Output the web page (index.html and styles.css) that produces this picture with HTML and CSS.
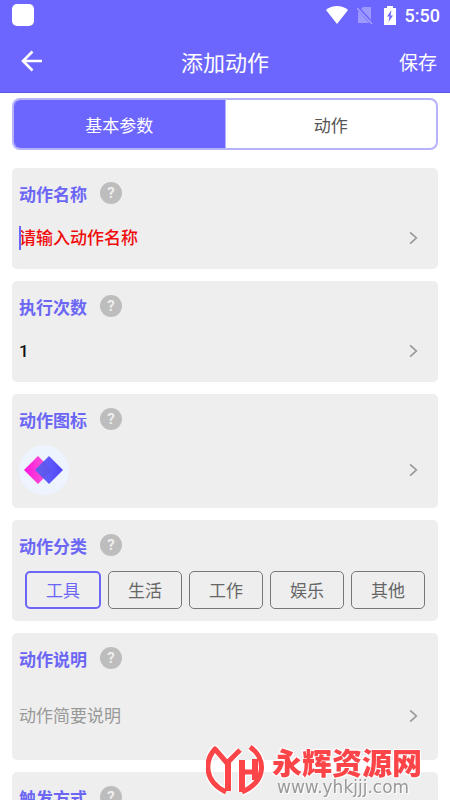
FILE: index.html
```html
<!DOCTYPE html>
<html lang="zh-CN">
<head>
<meta charset="utf-8">
<meta name="viewport" content="width=device-width, initial-scale=1">
<title>添加动作</title>
<link rel="stylesheet" href="styles.css">
</head>
<body>
<header class="top">
  <div class="status">
    <span class="app-dot"></span>
    <div class="status-icons">
      <svg width="22" height="18" viewBox="0 0 22 18"><path fill="#fff" d="M0 4C6-1.300 16-1.300 22 4L11 18Z"/></svg>
      <svg width="16" height="18" viewBox="0 0 16 18"><path fill="#9d99ff" d="M6 1h8v16H1V6Z"/><path d="M0 1L15 17.500" stroke="#6c66ff" stroke-width="3.500"/><path d="M0 2L15 18" stroke="#aaa6ff" stroke-width="1.300"/></svg>
      <svg class="battery" width="12" height="19" viewBox="0 0 12 19"><path fill="#fff" d="M3 0h6v2h3v17H0V2h3Z"/><path fill="#6c66ff" d="M7.500 4L3 10.500h2.500L4.500 16L9 9.500H6.500Z"/></svg>
      <span class="clock">5:50</span>
    </div>
  </div>
  <div class="appbar">
    <button class="back" type="button" aria-label="返回"><svg width="22" height="22" viewBox="0 0 22 22" fill="none" stroke="#fff" stroke-width="2.600"><path d="M21 11H2M11.500 1.500L2 11L11.500 20.500"/></svg></button>
    <h1>添加动作</h1>
    <button class="save" type="button">保存</button>
  </div>
</header>
<main>
  <nav class="tabs">
    <button class="tab active" type="button">基本参数</button>
    <button class="tab" type="button">动作</button>
  </nav>
  <section class="card">
    <div class="head"><label for="name">动作名称</label><button class="help" type="button" aria-label="帮助">?</button></div>
    <div class="row"><span class="caret"></span><input class="field required" id="name" type="text" placeholder="请输入动作名称"><svg class="arrow" viewBox="0 0 8 12"><path d="M1 1L6.500 6L1 11"/></svg></div>
  </section>
  <section class="card">
    <div class="head"><label for="count">执行次数</label><button class="help" type="button" aria-label="帮助">?</button></div>
    <div class="row"><input class="field" id="count" type="text" value="1"><svg class="arrow" viewBox="0 0 8 12"><path d="M1 1L6.500 6L1 11"/></svg></div>
  </section>
  <section class="card">
    <div class="head"><h2>动作图标</h2><button class="help" type="button" aria-label="帮助">?</button></div>
    <div class="row icon-row">
      <button class="picker" type="button" aria-label="选择图标">
        <svg width="50" height="50" viewBox="0 0 50 50">
          <defs>
            <linearGradient id="pink"><stop offset="0" stop-color="#ff14e0"/><stop offset="1" stop-color="#f269cd"/></linearGradient>
            <linearGradient id="blue"><stop offset="0" stop-color="#6b6eff"/><stop offset="1" stop-color="#5145f5"/></linearGradient>
            <clipPath id="left"><path d="M19 11L33 25L19 39L5 25Z"/></clipPath>
          </defs>
          <circle cx="25" cy="25" r="25" fill="#edf4fe"/>
          <path fill="url(#pink)" d="M19 11L33 25L19 39L5 25Z"/>
          <path fill="url(#blue)" d="M30 11L44 25L30 39L16 25Z"/>
          <path fill="#5b50df" opacity=".5" clip-path="url(#left)" d="M30 11L44 25L30 39L16 25Z"/>
        </svg>
      </button>
      <svg class="arrow" viewBox="0 0 8 12"><path d="M1 1L6.500 6L1 11"/></svg>
    </div>
  </section>
  <section class="card">
    <div class="head"><h2>动作分类</h2><button class="help" type="button" aria-label="帮助">?</button></div>
    <div class="chips">
      <button class="chip selected" type="button">工具</button>
      <button class="chip" type="button">生活</button>
      <button class="chip" type="button">工作</button>
      <button class="chip" type="button">娱乐</button>
      <button class="chip" type="button">其他</button>
    </div>
  </section>
  <section class="card">
    <div class="head"><label for="desc">动作说明</label><button class="help" type="button" aria-label="帮助">?</button></div>
    <div class="row desc-row"><input class="field" id="desc" type="text" placeholder="动作简要说明"><svg class="arrow" viewBox="0 0 8 12"><path d="M1 1L6.500 6L1 11"/></svg></div>
  </section>
  <section class="card">
    <div class="head"><h2>触发方式</h2><button class="help" type="button" aria-label="帮助">?</button></div>
    <div class="row"></div>
  </section>
</main>
<aside class="mark">
  <svg width="58" height="52" viewBox="0 0 58 52" fill="none" stroke-linejoin="round">
    <path stroke="#fff" stroke-width="8" d="M20 48C-3 37-1 16 9 5L21 19L34 6M22 18V47M36 16V48M36 28H49M49 15V36M44 3C60 14 61 37 36 48"/>
    <path stroke="#fb4548" stroke-width="5" d="M20 48C-3 37-1 16 9 5L21 19L34 6M36 28H49M44 3C60 14 61 37 36 48"/>
    <path stroke="#fb4548" stroke-width="6" d="M22 18V47M36 16V48M49 15V36"/>
  </svg>
  <div class="mark-text"><strong>永辉资源网</strong><span>www.yhkjjj.com</span></div>
</aside>
</body>
</html>
```
FILE: styles.css
```css
* { box-sizing: border-box; }

body {
  margin: 0;
  height: 100vh;
  overflow: hidden;
  display: flex;
  flex-direction: column;
  background: #fff;
  color: #111;
  font-family: Roboto, "Noto Sans CJK SC", sans-serif;
  font-size: 17px;
}

button, input {
  font: inherit;
  color: inherit;
  border: 0;
  padding: 0;
  background: none;
}

svg { display: block; }

.top {
  flex: none;
  background: #6c66ff;
  border-bottom: 1px solid #5c55e6;
  color: #fff;
}

.status {
  display: flex;
  justify-content: space-between;
  align-items: center;
  height: 30px;
  padding: 0 10px 0 12px;
}

.app-dot {
  width: 22px;
  height: 22px;
  border-radius: 5px;
  background: #fff;
}

.status-icons {
  display: flex;
  align-items: center;
  gap: 9px;
}

.battery { margin-left: 2px; }

.clock {
  font-size: 18px;
  font-weight: 500;
}

.appbar {
  display: grid;
  grid-template-columns: 1fr auto 1fr;
  align-items: center;
  height: 62px;
  padding: 0 13px;
}

.back {
  justify-self: start;
  padding-left: 8px;
}

.appbar h1 {
  margin: 0;
  font-size: 22px;
  font-weight: 400;
}

.save {
  justify-self: end;
  font-size: 19px;
}

main {
  flex: 1;
  min-height: 0;
  overflow: hidden;
  padding: 5px 12px 0;
}

.tabs {
  display: flex;
  height: 52px;
  margin-bottom: 18px;
  border: 2px solid #b7b3fb;
  border-radius: 8px;
  overflow: hidden;
}

.tab {
  flex: 1;
  color: #555;
}

.tab.active {
  background: #6c66ff;
  color: #fff;
  border-right: 1px solid #b7b3fb;
}

.card {
  margin-bottom: 12px;
  padding: 11px 7px 1px;
  border-radius: 5px;
  background: #eee;
}

.head {
  display: flex;
  align-items: center;
  gap: 13px;
  height: 28px;
  color: #6c66f5;
  font-weight: 700;
}

.head h2 {
  margin: 0;
  font-size: 17px;
}

.help {
  width: 22px;
  height: 22px;
  border-radius: 50%;
  background: #bdbdbd;
  color: #eee;
  font-size: 15px;
  font-weight: 700;
  line-height: 22px;
}

.row {
  position: relative;
  display: flex;
  align-items: center;
  height: 61px;
  padding-right: 13px;
}

.icon-row { height: 74px; }

.desc-row { height: 87px; }

.field {
  flex: 1;
  min-width: 0;
  height: 32px;
  outline: none;
  font-weight: 500;
}

.field::placeholder {
  color: #999;
  opacity: 1;
  font-weight: 400;
}

.required::placeholder {
  color: #f00c0c;
  font-weight: 500;
}

.caret {
  position: absolute;
  left: 0;
  width: 2px;
  height: 24px;
  background: #6c66ff;
}

.arrow {
  flex: none;
  margin-left: auto;
  width: 9px;
  height: 14px;
  fill: none;
  stroke: #999;
  stroke-width: 1.5;
}

.chips {
  display: flex;
  align-items: center;
  gap: 7px;
  height: 61px;
  padding: 0 6px;
}

.chip {
  flex: 1;
  height: 38px;
  border: 1px solid #777;
  border-radius: 5px;
  color: #666;
}

.chip.selected {
  border: 2px solid #6c66f5;
  color: #6c66f5;
}

.mark {
  position: fixed;
  right: 28px;
  bottom: 4px;
  display: flex;
  align-items: center;
  gap: 8px;
}

.mark-text {
  display: flex;
  flex-direction: column;
}

.mark strong {
  color: #fb4548;
  font-family: "Noto Sans CJK SC", sans-serif;
  font-size: 30px;
  font-weight: 900;
  line-height: 34px;
  text-shadow: 1px 1px #fff, -1px -1px #fff, 1px -1px #fff, -1px 1px #fff;
}

.mark span {
  padding-left: 5px;
  color: #999;
  font-family: "DejaVu Sans", sans-serif;
  font-size: 17px;
  line-height: 18px;
  text-shadow: 1px 1px #fff;
}
```
